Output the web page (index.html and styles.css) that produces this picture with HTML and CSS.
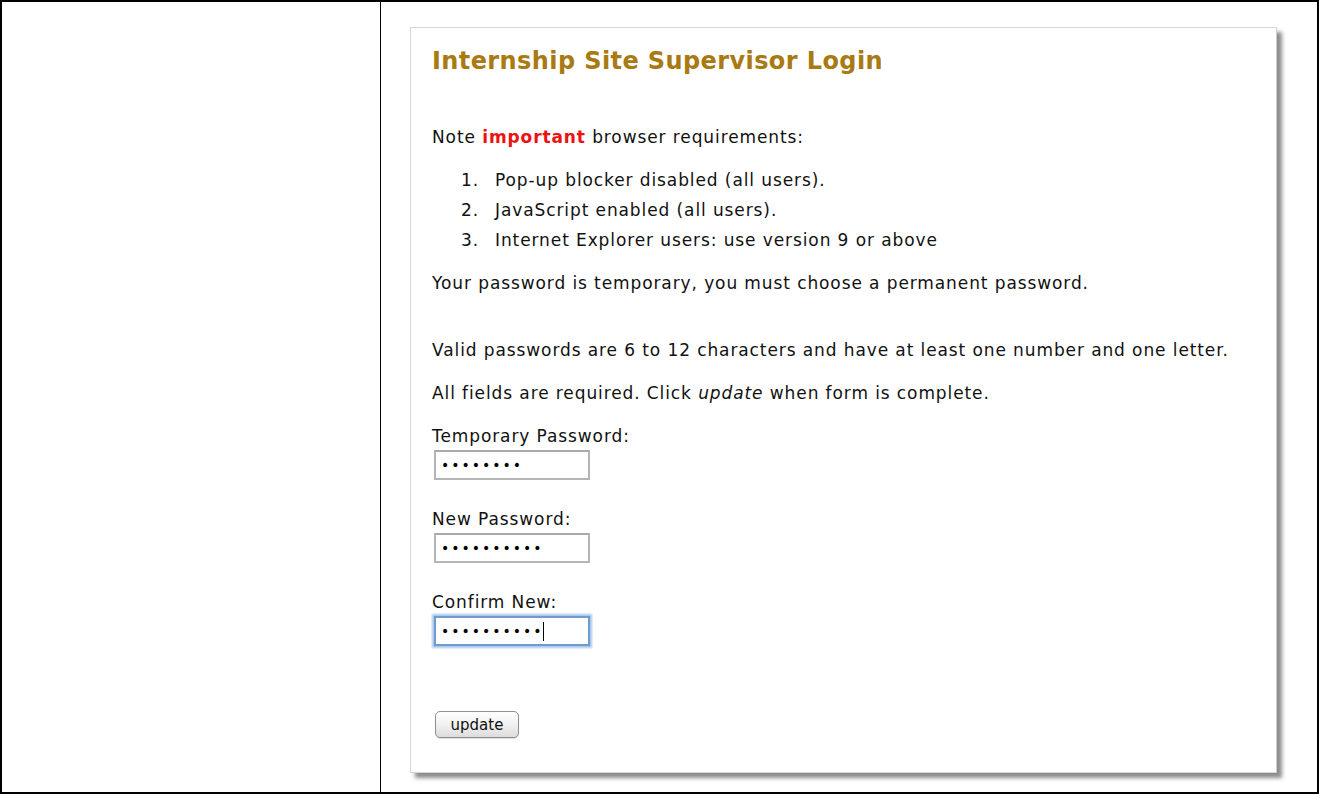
FILE: index.html
```html
<!DOCTYPE html>
<html lang="en">
<head>
<meta charset="utf-8">
<title>Internship Site Supervisor Login</title>
<link rel="stylesheet" href="styles.css">
</head>
<body>
<div class="frame">
  <div class="side"></div>
  <div class="main">
    <div class="panel">
      <h1 class="title">Internship Site Supervisor Login</h1>
      <p class="note">Note <strong class="important">important</strong> browser requirements:</p>
      <ol class="reqs">
        <li>Pop-up blocker disabled (all users).</li>
        <li>JavaScript enabled (all users).</li>
        <li>Internet Explorer users: use version 9 or above</li>
      </ol>
      <p class="temp">Your password is temporary, you must choose a permanent password.</p>
      <p class="valid">Valid passwords are 6 to 12 characters and have at least one number and one letter.</p>
      <p class="req">All fields are required. Click <em>update</em> when form is complete.</p>
      <form class="form">
        <label class="group">
          <span class="label">Temporary Password:</span>
          <span class="field"><span class="dots">••••••••</span></span>
        </label>
        <label class="group">
          <span class="label">New Password:</span>
          <span class="field"><span class="dots">••••••••••</span></span>
        </label>
        <label class="group">
          <span class="label">Confirm New:</span>
          <span class="field focused"><span class="dots">••••••••••</span><span class="caret"></span></span>
        </label>
        <button type="button" class="btn">update</button>
      </form>
    </div>
  </div>
</div>
</body>
</html>
```
FILE: styles.css
```css
html, body {
  margin: 0;
  padding: 0;
  background: #fff;
}
body {
  font-family: "DejaVu Sans", Verdana, sans-serif;
  color: #111;
}
.frame {
  box-sizing: border-box;
  width: 1319px;
  height: 794px;
  border: 2px solid #000;
  display: flex;
}
.side {
  width: 378px;
  border-right: 1px solid #000;
  flex: none;
}
.main {
  flex: 1;
  padding: 25px 0 0 29px;
}
.panel {
  box-sizing: border-box;
  width: 867px;
  height: 746px;
  border: 1px solid #d6d6d6;
  border-right-color: #cfcfcf;
  box-shadow: 5px 5px 4px rgba(0,0,0,0.45);
  background: #fff;
  padding: 18px 0 0 21px;
}
.title {
  margin: 0;
  font-size: 24px;
  line-height: 30px;
  font-weight: bold;
  letter-spacing: 0.4px;
  color: #a97a12;
}
.note, .temp, .valid, .req, .label, .reqs {
  font-size: 17px;
  line-height: 22px;
  letter-spacing: 0.9px;
}
p { margin: 0; }
.note { margin-top: 50px; }
.important { color: #ee1111; font-weight: bold; }
.reqs {
  margin: 17px 0 0 0;
  padding-left: 29px;
  list-style: none;
  counter-reset: req;
  line-height: 30px;
}
.reqs li { counter-increment: req; }
.reqs li::before {
  content: counter(req) ".";
  display: inline-block;
  width: 34px;
}
.temp { margin-top: 17px; }
.valid { margin-top: 45px; }
.req { margin-top: 21px; }
.form {
  margin-top: 21px;
  display: flex;
  flex-direction: column;
  align-items: flex-start;
}
.group {
  display: flex;
  flex-direction: column;
  align-items: flex-start;
  margin-bottom: 28px;
}
.field {
  position: relative;
  box-sizing: border-box;
  margin: 3px 0 0 2px;
  width: 156px;
  height: 30px;
  border: 2px solid #b5b5b5;
  border-top-color: #a9a9a9;
  background: #fff;
  display: flex;
  align-items: center;
  padding-left: 5px;
}
.dots {
  font-family: "DejaVu Sans", sans-serif;
  font-size: 14px;
  letter-spacing: 2px;
  color: #000;
  line-height: 1;
}
.focused {
  border: 2px solid #6f9bd0;
  box-shadow: 0 0 2px 2px #a9c6ea;
}
.caret {
  display: inline-block;
  width: 1.5px;
  height: 19px;
  background: #000;
  margin-left: -1px;
}
.btn {
  margin: 37px 0 0 3px;
  box-sizing: border-box;
  width: 84px;
  height: 27px;
  border: 1px solid #8f8f8f;
  border-radius: 5px;
  background: linear-gradient(#ffffff, #f1f1f1 50%, #dcdcdc);
  font-family: "DejaVu Sans", sans-serif;
  font-size: 15px;
  color: #111;
  padding: 0;
  box-shadow: 0 1px 1px rgba(0,0,0,0.15);
}
```
